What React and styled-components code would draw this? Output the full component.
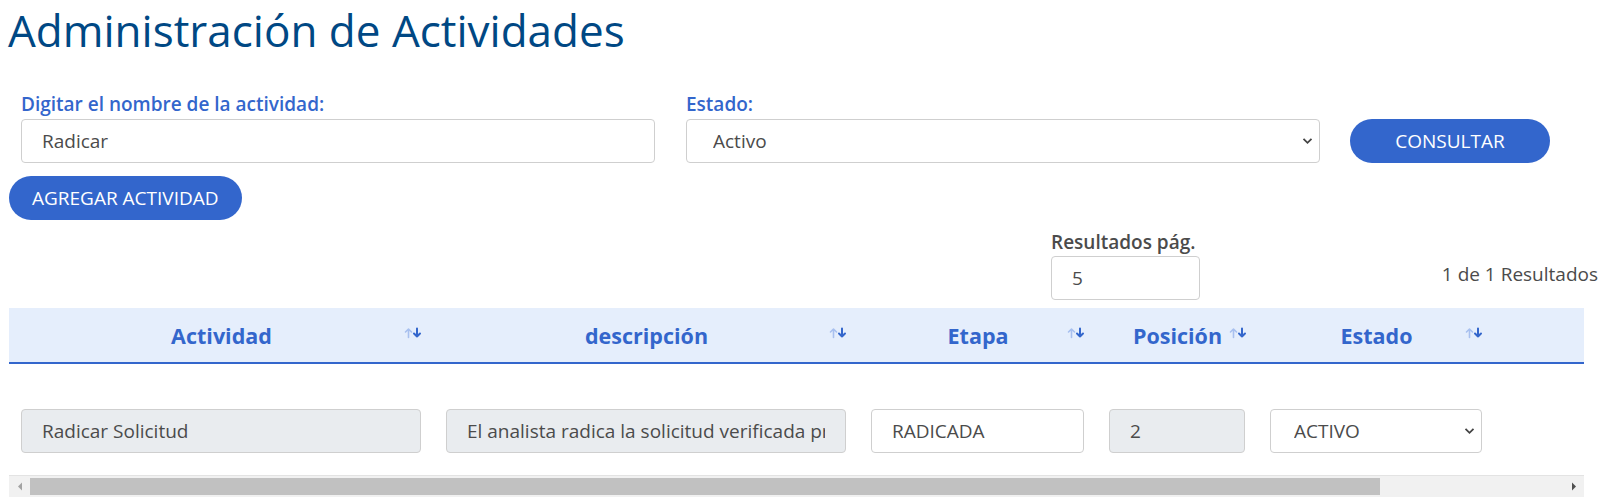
import React from 'react';
import styled, { createGlobalStyle } from 'styled-components';

const Global = createGlobalStyle`
  html, body { margin: 0; padding: 0; background: #fff; }
  body { font-family: "Open Sans", "Noto Sans", sans-serif; color: #4b4b4b; }
  * { box-sizing: border-box; }
`;

const chevron = `url("data:image/svg+xml,%3Csvg xmlns='http://www.w3.org/2000/svg' width='11' height='8' viewBox='0 0 11 8'%3E%3Cpolyline points='1.5,1.8 5.5,5.8 9.5,1.8' fill='none' stroke='%23444' stroke-width='1.8'/%3E%3C/svg%3E")`;

const Page = styled.div`
  padding: 0 10px 0 9px;
`;

const Title = styled.h1`
  margin: 0 0 0 -1px;
  padding-top: 1px;
  font-family: "Open Sans", sans-serif;
  font-weight: 400;
  font-size: 44px;
  line-height: 59px;
  color: #004884;
`;

const FilterRow = styled.div`
  display: flex;
  align-items: flex-end;
  gap: 31px;
  margin-top: 32px;
  padding-left: 12px;
`;

const Field = styled.div`
  display: flex;
  flex-direction: column;
  width: ${p => p.$w}px;
`;

const Label = styled.label`
  font-size: 19px;
  line-height: 24px;
  font-weight: 600;
  color: ${p => (p.$dark ? '#4b4b4b' : '#3366cc')};
  margin-bottom: ${p => p.$mb ?? 3}px;
`;

const inputBase = `
  height: 44px;
  border: 1px solid #cfcfcf;
  border-radius: 4px;
  font-family: "Open Sans", sans-serif;
  font-size: 19px;
  color: #4b4b4b;
  outline: none;
`;

const TextInput = styled.input`
  ${inputBase}
  width: 100%;
  padding: 0 20px;
  background: ${p => (p.disabled ? '#e9ecef' : '#fff')};
  &:disabled { color: #4b4b4b; }
`;

const Select = styled.select`
  ${inputBase}
  width: 100%;
  padding: 0 30px 0 ${p => p.$pl ?? 23}px;
  appearance: none;
  -webkit-appearance: none;
  background: #fff ${chevron} no-repeat right 6px center;
`;

const PillButton = styled.button`
  height: 44px;
  padding: 0 ${p => p.$px}px;
  width: ${p => (p.$w ? `${p.$w}px` : 'auto')};
  border: none;
  border-radius: 22px;
  background: #3366cc;
  color: #fff;
  font-family: "Open Sans", sans-serif;
  font-size: 19px;
  cursor: pointer;
`;

const ConsultWrap = styled.div`
  margin-left: -1px;
`;

const AddRow = styled.div`
  margin-top: 13px;
`;

const ResultsBar = styled.div`
  display: flex;
  align-items: center;
  margin-top: 10px;
`;

const PageSize = styled.div`
  display: flex;
  flex-direction: column;
  width: 149px;
  margin-left: 1042px;
`;

const Count = styled.div`
  margin-left: auto;
  margin-top: 18px;
  font-size: 19px;
  color: #4b4b4b;
`;

const ScrollBox = styled.div`
  margin-top: 8px;
  margin-right: 14px;
  overflow-x: auto;
  scrollbar-width: none;
`;

const Table = styled.table`
  width: 1798px;
  table-layout: fixed;
  border-collapse: collapse;
`;

const Th = styled.th`
  position: relative;
  width: ${p => p.$w}px;
  height: 55px;
  padding: 0;
  background: #e5eefc;
  border-bottom: 2px solid #3366cc;
  color: #3366cc;
  font-family: "Open Sans", sans-serif;
  font-size: 21.5px;
  font-weight: 700;
  text-align: center;
`;

const SortIcon = styled.svg`
  position: absolute;
  right: ${p => p.$r ?? 11}px;
  top: 19px;
`;

const Td = styled.td`
  padding: 45px 13px 22px 12px;
`;

const ScrollBar = styled.div`
  display: flex;
  height: 22px;
  margin-right: 14px;
  background: #f1f1f1;
  border-top: 1px solid #e3e3e3;
`;

const ArrowBtn = styled.div`
  width: 21px;
  flex: none;
  display: flex;
  align-items: center;
  justify-content: center;
`;

const Track = styled.div`
  flex: 1;
  display: flex;
  align-items: stretch;
  padding: 2px 0;
`;

const Thumb = styled.div`
  width: ${p => p.$w}px;
  background: #c1c1c1;
`;

const Sort = ({ r }) => (
  <SortIcon $r={r} width="19" height="12" viewBox="0 0 19 12">
    <g fill="none" strokeLinecap="round" strokeLinejoin="round">
      <path d="M4.5 10.5V2M1.5 5 4.5 2 7.5 5" stroke="#a8c0ef" strokeWidth="1.6" />
      <path d="M13 1.5V9.5M10 6.5 13 9.5 16 6.5" stroke="#3366cc" strokeWidth="2" />
    </g>
  </SortIcon>
);

const columns = [
  { label: 'Actividad', w: 425 },
  { label: 'descripción', w: 425 },
  { label: 'Etapa', w: 238 },
  { label: 'Posición', w: 161, r: 10 },
  { label: 'Estado', w: 237 },
];

export default function App() {
  return (
    <>
      <Global />
      <Page>
        <Title>Administración de Actividades</Title>
        <FilterRow>
          <Field $w={634}>
            <Label>Digitar el nombre de la actividad:</Label>
            <TextInput defaultValue="Radicar" />
          </Field>
          <Field $w={634}>
            <Label>Estado:</Label>
            <Select defaultValue="Activo" $pl={26}>
              <option>Activo</option>
              <option>Inactivo</option>
            </Select>
          </Field>
          <ConsultWrap>
            <PillButton $w={200} $px={0}>CONSULTAR</PillButton>
          </ConsultWrap>
        </FilterRow>
        <AddRow>
          <PillButton $px={23}>AGREGAR ACTIVIDAD</PillButton>
        </AddRow>
        <ResultsBar>
          <PageSize>
            <Label $dark $mb={2}>Resultados pág.</Label>
            <TextInput defaultValue="5" />
          </PageSize>
          <Count>1 de 1 Resultados</Count>
        </ResultsBar>
        <ScrollBox>
          <Table>
            <thead>
              <tr>
                {columns.map(c => (
                  <Th key={c.label} $w={c.w}>
                    {c.label}
                    <Sort r={c.r} />
                  </Th>
                ))}
                <Th $w={312} />
              </tr>
            </thead>
            <tbody>
              <tr>
                <Td><TextInput disabled defaultValue="Radicar Solicitud" /></Td>
                <Td><TextInput disabled defaultValue="El analista radica la solicitud verificada previamente" /></Td>
                <Td><TextInput defaultValue="RADICADA" /></Td>
                <Td><TextInput disabled defaultValue="2" /></Td>
                <Td>
                  <Select defaultValue="ACTIVO">
                    <option>ACTIVO</option>
                    <option>INACTIVO</option>
                  </Select>
                </Td>
                <Td />
              </tr>
            </tbody>
          </Table>
        </ScrollBox>
        <ScrollBar>
          <ArrowBtn>
            <svg width="6" height="9" viewBox="0 0 6 9"><polygon points="5,0.5 1,4.5 5,8.5" fill="#a3a3a3" /></svg>
          </ArrowBtn>
          <Track>
            <Thumb $w={1350} />
          </Track>
          <ArrowBtn>
            <svg width="6" height="9" viewBox="0 0 6 9"><polygon points="1,0.5 5,4.5 1,8.5" fill="#505050" /></svg>
          </ArrowBtn>
        </ScrollBar>
      </Page>
    </>
  );
}
